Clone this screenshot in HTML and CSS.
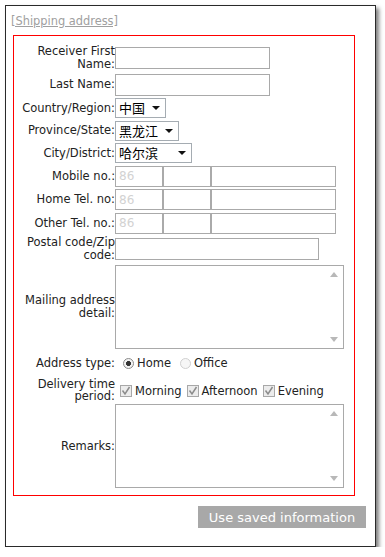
FILE: index.html
```html
<!DOCTYPE html>
<html lang="en">
<head>
    <meta charset="UTF-8">
    <meta name="viewport" content="width=device-width, initial-scale=1.0">
    <title>Shipping Address</title>
    <link rel="stylesheet" href="styles.css">
</head>
<body>
    <div class="window">
        <a class="section-title" href="#">[Shipping address]</a>

        <form class="address-form">
            <label class="field-label">Receiver First Name:</label>
            <input class="text-input" type="text">

            <label class="field-label">Last Name:</label>
            <input class="text-input" type="text">

            <label class="field-label">Country/Region:</label>
            <span class="select-wrap"><select class="select country"><option>中国</option></select></span>

            <label class="field-label">Province/State:</label>
            <span class="select-wrap"><select class="select province"><option>黑龙江</option></select></span>

            <label class="field-label">City/District:</label>
            <span class="select-wrap"><select class="select city"><option>哈尔滨</option></select></span>

            <label class="field-label">Mobile no.:</label>
            <div class="phone">
                <input class="phone-code" type="text" placeholder="86">
                <input class="phone-area" type="text">
                <input class="phone-number" type="text">
            </div>

            <label class="field-label">Home Tel. no:</label>
            <div class="phone">
                <input class="phone-code" type="text" placeholder="86">
                <input class="phone-area" type="text">
                <input class="phone-number" type="text">
            </div>

            <label class="field-label">Other Tel. no.:</label>
            <div class="phone">
                <input class="phone-code" type="text" placeholder="86">
                <input class="phone-area" type="text">
                <input class="phone-number" type="text">
            </div>

            <label class="field-label">Postal code/Zip code:</label>
            <input class="text-input postal" type="text">

            <label class="field-label">Mailing address detail:</label>
            <span class="scroll-box"><textarea class="area"></textarea></span>

            <label class="field-label">Address type:</label>
            <div class="choices radios">
                <span class="choice"><span class="radio checked"></span>Home</span>
                <span class="choice"><span class="radio"></span>Office</span>
            </div>

            <label class="field-label tight">Delivery time period:</label>
            <div class="choices checks">
                <span class="choice">
                    <span class="checkbox"><svg width="10" height="10" viewBox="0 0 10 10"><path d="M1.5 4.5 L4 8 L8.5 1" fill="none" stroke="#8c8c8c" stroke-width="1.5"/></svg></span>Morning
                </span>
                <span class="choice">
                    <span class="checkbox"><svg width="10" height="10" viewBox="0 0 10 10"><path d="M1.5 4.5 L4 8 L8.5 1" fill="none" stroke="#8c8c8c" stroke-width="1.5"/></svg></span>Afternoon
                </span>
                <span class="choice">
                    <span class="checkbox"><svg width="10" height="10" viewBox="0 0 10 10"><path d="M1.5 4.5 L4 8 L8.5 1" fill="none" stroke="#8c8c8c" stroke-width="1.5"/></svg></span>Evening
                </span>
            </div>

            <label class="field-label">Remarks:</label>
            <span class="scroll-box"><textarea class="area"></textarea></span>
        </form>

        <div class="actions">
            <button type="button" class="saved-button">Use saved information</button>
        </div>
    </div>
</body>
</html>
```

FILE: styles.css
```css
body {
    margin: 0;
    background-color: #fff;
    font-family: "DejaVu Sans", Verdana, sans-serif;
    font-size: 11.5px;
    color: #222;
}

.window {
    box-sizing: border-box;
    width: 371px;
    height: 542px;
    margin: 5px 0 0 5px;
    border: 1px solid #2a2a2a;
    background-color: #fff;
    box-shadow: 3px 3px 4px rgba(0, 0, 0, 0.5);
}

.section-title {
    display: inline-block;
    margin: 9px 0 0 5px;
    line-height: 13px;
    font-size: 11.4px;
    color: #a0a0a0;
    text-decoration: underline;
}

.address-form {
    box-sizing: border-box;
    width: 342px;
    margin: 7px 0 0 7px;
    padding: 9px 0 7px 0;
    border: 1px solid #ff0000;
    display: grid;
    grid-template-columns: 101px 1fr;
    row-gap: 2.5px;
    align-items: center;
}

.field-label {
    text-align: right;
    line-height: 13px;
    color: #222;
}

.field-label.tight {
    line-height: 12px;
}

.text-input {
    box-sizing: border-box;
    width: 155px;
    height: 22px;
    border: 1px solid #a9a9a9;
    padding: 0 3px;
    font-family: inherit;
}

.text-input.postal {
    width: 204px;
}

/* selects with the small black arrow */
.select-wrap {
    position: relative;
    justify-self: start;
    display: inline-block;
    height: 20px;
}

.select-wrap::after {
    content: "";
    position: absolute;
    right: 6px;
    top: 8px;
    border-left: 4px solid transparent;
    border-right: 4px solid transparent;
    border-top: 4px solid #111;
    pointer-events: none;
}

.select {
    -webkit-appearance: none;
    appearance: none;
    box-sizing: border-box;
    height: 20px;
    margin: 0;
    padding: 0 0 0 3px;
    border: 1px solid #a5acb2;
    border-radius: 0;
    background-color: #fff;
    font-family: "Noto Sans CJK SC", sans-serif;
    font-size: 13px;
    line-height: 18px;
    color: #000;
}

.select.country { width: 51px; }
.select.province { width: 64px; }
.select.city { width: 77px; }

/* phone number groups */
.phone {
    display: flex;
    height: 21px;
}

.phone input {
    box-sizing: border-box;
    height: 21px;
    margin: 0;
    border: 1px solid #aaa;
    padding: 0 3px;
    font-family: inherit;
    font-size: 12px;
}

.phone input::placeholder {
    color: #d2d2d2;
}

.phone-code { width: 48px; }
.phone-area { width: 48px; }
.phone-number { width: 125px; }

/* textareas with the greyed scroll arrows */
.scroll-box {
    position: relative;
    justify-self: start;
    display: block;
    height: 84px;
}

.scroll-box::before,
.scroll-box::after {
    content: "";
    position: absolute;
    right: 6px;
    border-left: 4px solid transparent;
    border-right: 4px solid transparent;
    pointer-events: none;
}

.scroll-box::before {
    top: 7px;
    border-bottom: 5px solid #b8b8b8;
}

.scroll-box::after {
    bottom: 7px;
    border-top: 5px solid #b8b8b8;
}

.area {
    box-sizing: border-box;
    display: block;
    width: 229px;
    height: 84px;
    margin: 0;
    border: 1px solid #a9a9a9;
    resize: none;
    overflow: hidden;
    font-family: inherit;
}

/* radios and checkboxes */
.choices {
    display: flex;
    align-items: center;
    color: #222;
}

.radios {
    height: 24px;
    padding-left: 8px;
    gap: 9px;
}

.checks {
    height: 24px;
    padding: 2px 0 0 5px;
    box-sizing: border-box;
    gap: 5px;
}

.choice {
    display: inline-flex;
    align-items: center;
    gap: 3px;
}

.radio {
    box-sizing: border-box;
    width: 11px;
    height: 11px;
    border-radius: 50%;
    border: 1px solid #d0d0d0;
    background-color: #f6f6f6;
}

.radio.checked {
    border-color: #8a8a8a;
    background: radial-gradient(circle, #333 0, #333 2.2px, #f2f2f2 2.8px);
}

.checkbox {
    box-sizing: border-box;
    width: 12px;
    height: 12px;
    border: 1px solid #a8a8a8;
    background-color: #ececec;
    display: inline-flex;
    align-items: center;
    justify-content: center;
}

.actions {
    display: flex;
    justify-content: flex-end;
    padding: 10px 9px 0 0;
}

.saved-button {
    width: 168px;
    height: 22px;
    padding: 0;
    border: none;
    background-color: #a8a8a8;
    color: #fff;
    font-family: "DejaVu Sans", Verdana, sans-serif;
    font-size: 13px;
}
```
